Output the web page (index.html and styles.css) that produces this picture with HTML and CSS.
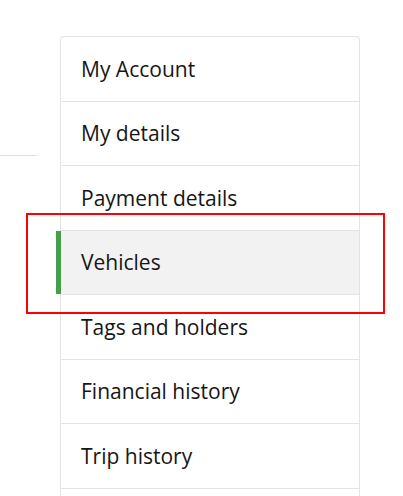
FILE: index.html
```html
<!DOCTYPE html>
<html>
<head>
<meta charset="utf-8">
<link rel="stylesheet" href="styles.css">
</head>
<body>
<div class="page">
  <div class="aside-line"></div>
  <nav class="menu">
    <div class="item">My Account</div>
    <div class="item">My details</div>
    <div class="item">Payment details</div>
    <div class="item active">Vehicles</div>
    <div class="item">Tags and holders</div>
    <div class="item">Financial history</div>
    <div class="item">Trip history</div>
  </nav>
  <div class="highlight"></div>
</div>
</body>
</html>
```
FILE: styles.css
```css
html, body {
  margin: 0;
  padding: 0;
  background: #ffffff;
}
body {
  font-family: "Open Sans", "Noto Sans", sans-serif;
  color: #161616;
  overflow: hidden;
  height: 496px;
}
.page {
  position: relative;
  display: flex;
  align-items: flex-start;
  padding-top: 36px;
}
.aside-line {
  width: 37px;
  margin-top: 119px;
  border-top: 1px solid #dddddd;
}
.menu {
  margin-left: 23px;
  width: 300px;
  box-sizing: border-box;
  padding-bottom: 30px;
  border: 1px solid #e3e3e3;
  border-bottom: none;
  border-radius: 4px 4px 0 0;
}
.item {
  position: relative;
  display: flex;
  align-items: center;
  box-sizing: border-box;
  height: 64.5px;
  padding: 0 20px;
  border-bottom: 1px solid #e3e3e3;
  font-size: 21px;
}
.item.active {
  background: #f2f2f2;
}
.item.active::before {
  content: "";
  position: absolute;
  left: -5px;
  top: 0;
  bottom: 0;
  width: 5px;
  background: #43a047;
}
.highlight {
  position: absolute;
  left: 26px;
  top: 213px;
  width: 359px;
  height: 101px;
  box-sizing: border-box;
  border: 2px solid #ff0000;
}
```
